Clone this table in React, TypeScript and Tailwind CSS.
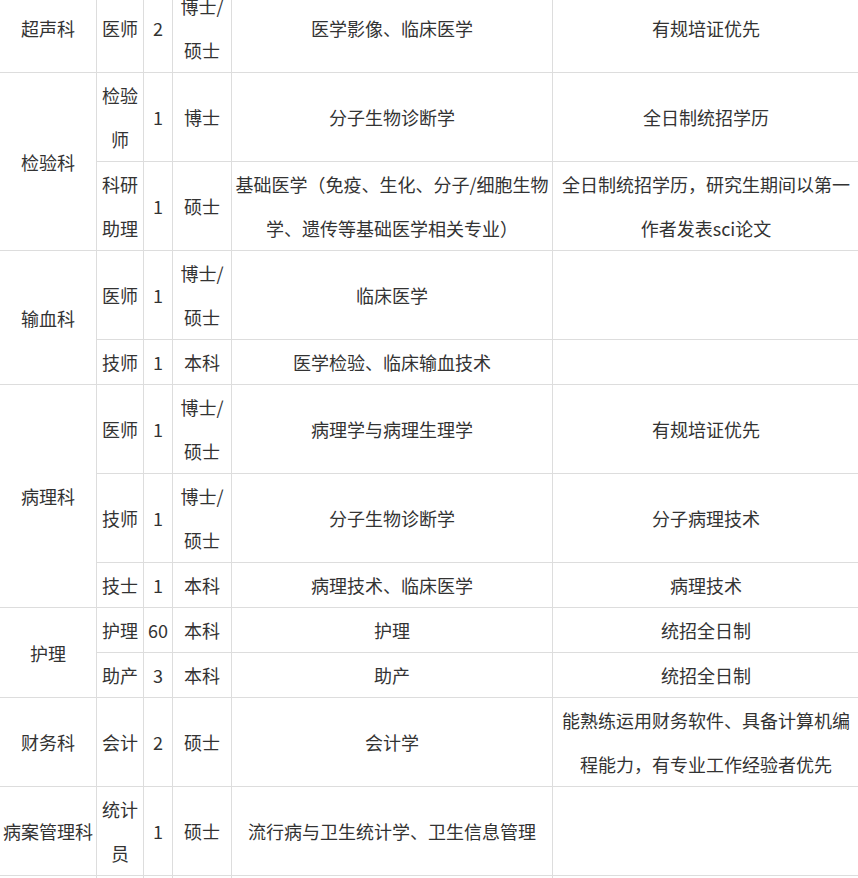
type Row = {
  dept?: string;
  span?: number;
  post: string;
  count: string;
  degree: string;
  major: string;
  note: string;
};

const rows: Row[] = [
  { dept: "超声科", span: 1, post: "医师", count: "2", degree: "博士/硕士", major: "医学影像、临床医学", note: "有规培证优先" },
  { dept: "检验科", span: 2, post: "检验师", count: "1", degree: "博士", major: "分子生物诊断学", note: "全日制统招学历" },
  {
    post: "科研助理",
    count: "1",
    degree: "硕士",
    major: "基础医学（免疫、生化、分子/细胞生物学、遗传等基础医学相关专业）",
    note: "全日制统招学历，研究生期间以第一作者发表sci论文",
  },
  { dept: "输血科", span: 2, post: "医师", count: "1", degree: "博士/硕士", major: "临床医学", note: "" },
  { post: "技师", count: "1", degree: "本科", major: "医学检验、临床输血技术", note: "" },
  { dept: "病理科", span: 3, post: "医师", count: "1", degree: "博士/硕士", major: "病理学与病理生理学", note: "有规培证优先" },
  { post: "技师", count: "1", degree: "博士/硕士", major: "分子生物诊断学", note: "分子病理技术" },
  { post: "技士", count: "1", degree: "本科", major: "病理技术、临床医学", note: "病理技术" },
  { dept: "护理", span: 2, post: "护理", count: "60", degree: "本科", major: "护理", note: "统招全日制" },
  { post: "助产", count: "3", degree: "本科", major: "助产", note: "统招全日制" },
  {
    dept: "财务科",
    span: 1,
    post: "会计",
    count: "2",
    degree: "硕士",
    major: "会计学",
    note: "能熟练运用财务软件、具备计算机编程能力，有专业工作经验者优先",
  },
  { dept: "病案管理科", span: 1, post: "统计员", count: "1", degree: "硕士", major: "流行病与卫生统计学、卫生信息管理", note: "" },
];

const cell = "border border-[#dddddd] px-[2px] py-0 text-center align-middle";

export default function App() {
  return (
    <div
      className="w-[858px] h-[878px] overflow-hidden bg-white text-[#333333] text-[18px] leading-[44px]"
      style={{ fontFamily: '"Noto Sans CJK SC", "Noto Sans", sans-serif' }}
    >
      <table className="-mt-[17px] -ml-px w-[860px] table-fixed border-collapse">
        <colgroup>
          <col className="w-[97px]" />
          <col className="w-[47px]" />
          <col className="w-[29px]" />
          <col className="w-[59px]" />
          <col className="w-[321px]" />
          <col className="w-[307px]" />
        </colgroup>
        <tbody>
          {rows.map((r, i) => (
            <tr key={i}>
              {r.dept && (
                <td className={cell} rowSpan={r.span}>
                  {r.dept}
                </td>
              )}
              <td className={cell}>{r.post}</td>
              <td className={cell}>{r.count}</td>
              <td className={cell}>{r.degree}</td>
              <td className={cell}>{r.major}</td>
              <td className={cell}>{r.note}</td>
            </tr>
          ))}
          <tr>
            <td className={cell}>&nbsp;</td>
            <td className={cell}></td>
            <td className={cell}></td>
            <td className={cell}></td>
            <td className={cell}></td>
            <td className={cell}></td>
          </tr>
        </tbody>
      </table>
    </div>
  );
}
